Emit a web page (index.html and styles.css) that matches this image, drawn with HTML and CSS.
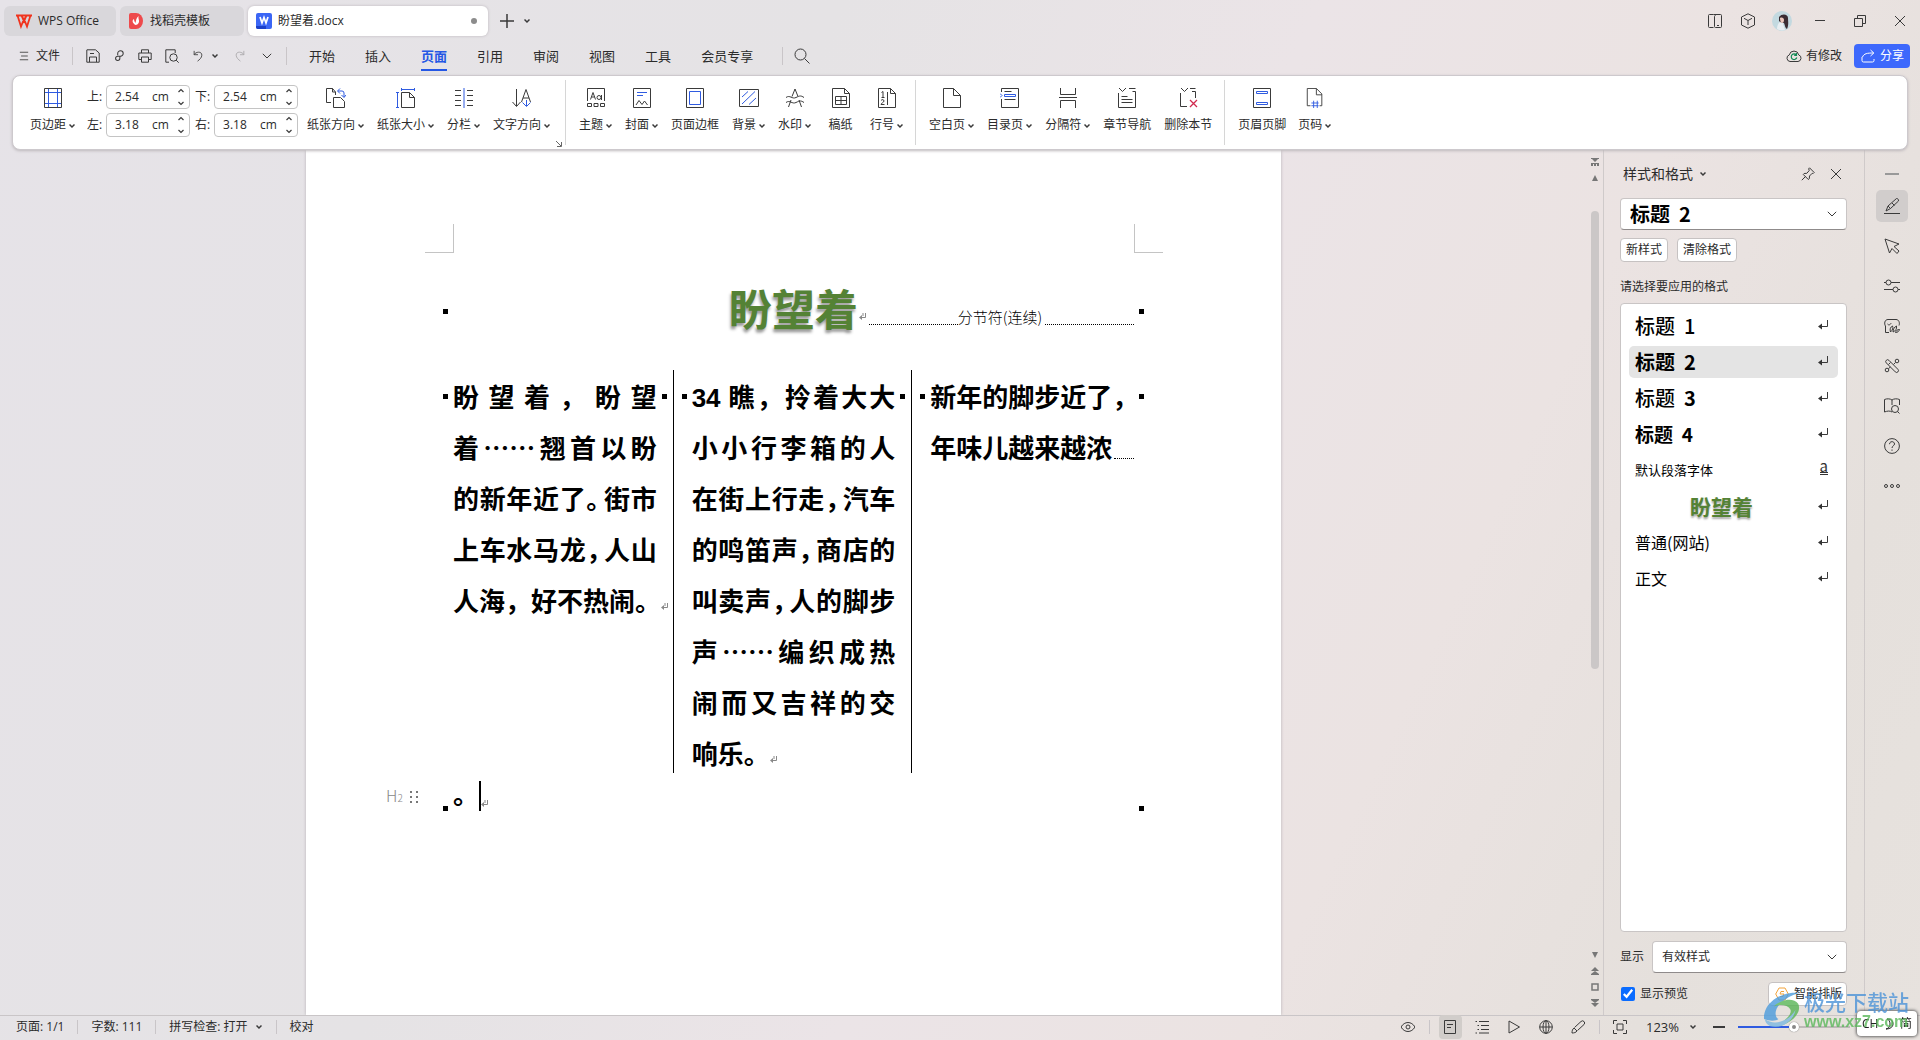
FILE: index.html
```html
<!DOCTYPE html>
<html lang="zh-CN">
<head>
<meta charset="utf-8">
<title>盼望着.docx</title>
<link rel="stylesheet" href="styles.css">
</head>
<body>
<svg class="defs" aria-hidden="true">
  <symbol id="caret" viewBox="0 0 6 6"><path d="M.5 1.500 3 4l2.500-2.500" stroke-width="1.500"/></symbol>
  <symbol id="chev" viewBox="0 0 10 6"><path d="M.8.8 5 5 9.200.8"/></symbol>
  <symbol id="spin" viewBox="0 0 6 18"><path d="M.5 4 3 1.500 5.500 4M.5 14 3 16.500 5.500 14" stroke-width="1.200"/></symbol>
  <symbol id="ret" viewBox="0 0 10 10"><path d="M9.500 0v6.500H2"/><path d="M0 6.500 4 3.500v6z" fill="#333" stroke="none"/></symbol>
  <symbol id="mark" viewBox="0 0 7 8"><path d="M6.500 0v4.500H2M4 0v3" stroke="#888"/><path d="M0 4.500 3 2v5z" fill="#888" stroke="none"/></symbol>
</svg>

<header>
  <div class="tabbar">
    <button class="tab tab-home"><svg class="i16" viewBox="0 0 16 14"><path d="M0 1.500h16M1.500 1.500l3.500 11L8 5l3 7.500 3.500-11M5.500 1.500l2.500 6 2.500-6" stroke="#f0331d" stroke-width="1.800"/></svg><span>WPS Office</span></button>
    <button class="tab tab-tpl"><svg class="i16" viewBox="0 0 14 16"><path d="M0 2a2 2 0 0 1 2-2h5a7 8 0 0 1 0 16H2a2 2 0 0 1-2-2z" fill="#ee4a4c" stroke="none"/><path d="M6.500 12C3 10 3 7 5 6c0 2 1 3 1.500 4C7 8 7 5 9.500 3c-.5 3 1 4 .5 6s-2 3-3.500 3z" fill="#fff" stroke="none"/></svg><span>找稻壳模板</span></button>
    <button class="tab tab-doc"><svg class="i16" viewBox="0 0 16 16"><rect width="16" height="16" rx="2" fill="#3b66f5" stroke="none"/><path d="M0 13h10v3H2a2 2 0 0 1-2-2z" fill="#1c40c8" stroke="none"/><path d="m4 4 2 6 2-5.500L10 10l2-6" stroke="#fff" stroke-width="1.700"/></svg><span>盼望着.docx</span><i class="dot"></i></button>
    <button class="bare" aria-label="新建"><svg class="i14" viewBox="0 0 14 14"><path d="M7 0v14M0 7h14" stroke-width="1.500"/></svg></button>
    <button class="bare" aria-label="标签列表"><svg class="caret" viewBox="0 0 6 6"><use href="#caret"/></svg></button>
    <div class="win">
      <button class="bare" aria-label="分屏"><svg class="i14" viewBox="0 0 14 14"><path d="M5.500.5h-4a1 1 0 0 0-1 1v11a1 1 0 0 0 1 1h4M5.500.5h7a1 1 0 0 1 1 1v11a1 1 0 0 1-1 1h-5a1 1 0 0 1-1-1v-10a1 1 0 0 1 1-1M9 11.500h2"/></svg></button>
      <button class="bare" aria-label="应用"><svg class="i16" viewBox="0 0 16 16"><path d="M8 .8 14.500 4v8L8 15.200 1.500 12V4zM4 5.300 8 7.500l4-2.200M8 7.500V12"/></svg></button>
      <button class="bare" aria-label="账号"><svg class="i20" viewBox="0 0 20 20"><circle cx="10" cy="10" r="10" fill="#c3d9e0" stroke="none"/><path d="M5 18c0-4 2-7 5-8l3 9a10 10 0 0 1-8-1z" fill="#e8eef2" stroke="none"/><path d="M7 6c3-4 9-3 9 1 0 3 1 7-1 11-2-1-2-4-3-6-2 0-4-1-5-2z" fill="#3a2c33" stroke="none"/><path d="M8 7c2-1 4 0 4 2s-1 3-2 3-2-2-2-5z" fill="#ecc8bd" stroke="none"/></svg></button>
      <button class="bare" aria-label="最小化"><svg class="i12" viewBox="0 0 12 12"><path d="M1 5.500h10"/></svg></button>
      <button class="bare" aria-label="还原"><svg class="i12" viewBox="0 0 12 12"><path d="M.5 3.500h8v8h-8zM3.500 3V.5h8v8H9"/></svg></button>
      <button class="bare" aria-label="关闭"><svg class="i12" viewBox="0 0 12 12"><path d="m1 1 10 10M11 1 1 11"/></svg></button>
    </div>
  </div>

  <div class="menubar">
    <button class="bare file"><svg class="i10" viewBox="0 0 10 12"><path d="M0 1.500h10M1.500 6h8M0 10.500h10"/></svg><span>文件</span></button>
    <i class="vsep"></i>
    <div class="quick">
      <button class="bare" aria-label="保存"><svg class="i14" viewBox="0 0 14 14"><path d="M1 .8h8.500L13.200 4v9.200H.8V.8M3.500 13V8h7v5M4 4.500h4"/></svg></button>
      <button class="bare" aria-label="输出"><svg class="i12" viewBox="0 0 14 14"><path d="M5.500 6V4a3.200 3.200 0 1 1 3.200 3.200H5.500a2.500 2.500 0 1 0 2.500 2.500V7" stroke-width="1.200"/></svg></button>
      <button class="bare" aria-label="打印"><svg class="i14" viewBox="0 0 14 14"><path d="M3.500 4V.8h7V4M3 10.500H.8V4h12.400v6.500H11M3.500 8h7v5.200h-7z"/></svg></button>
      <button class="bare" aria-label="打印预览"><svg class="i14" viewBox="0 0 14 14"><path d="M4 13.200H.8V.8h9.400V4"/><circle cx="8.500" cy="8.500" r="3.700"/><path d="m11.200 11.200 2.500 2.500"/></svg></button>
      <button class="bare undo" aria-label="撤销"><svg class="i12" viewBox="0 0 12 14"><path d="M1.500 1v4.500H6M1.500 5.500C3 2 10.500 1 10.500 6c0 3-3 5.500-5 7"/></svg><svg class="caret" viewBox="0 0 6 6"><use href="#caret"/></svg></button>
      <button class="bare faded" aria-label="恢复"><svg class="i12" viewBox="0 0 12 14"><path d="M10.500 1v4.500H6M10.500 5.500C9 2 1.500 1 1.500 6c0 3 3 5.500 5 7"/></svg></button>
      <button class="bare" aria-label="更多命令"><svg class="i10" viewBox="0 0 10 6"><use href="#chev"/></svg></button>
    </div>
    <i class="vsep"></i>
    <nav class="menu">
      <a href="#">开始</a><a href="#">插入</a><a href="#" class="on">页面</a><a href="#">引用</a><a href="#">审阅</a><a href="#">视图</a><a href="#">工具</a><a href="#">会员专享</a>
    </nav>
    <i class="vsep"></i>
    <button class="bare search" aria-label="搜索"><svg class="i16" viewBox="0 0 16 16"><circle cx="6.500" cy="6.500" r="5.500"/><path d="m10.500 10.500 5 5"/></svg></button>
    <div class="share-area">
      <button class="bare changed"><svg class="i16" viewBox="0 0 16 14"><path d="M4 12.500a3.400 3.400 0 0 1-.7-6.600 4.800 4.800 0 0 1 9.400 0 3.400 3.400 0 0 1-.7 6.600z"/><path d="M10.300 6a2.800 2.800 0 1 0 .5 2.500M10.500 4v2.300H8.200" stroke="#118a55" stroke-width="1.200"/></svg><span>有修改</span></button>
      <button class="share"><svg class="i14" viewBox="0 0 14 14"><path d="M1 8v3.500a1.500 1.500 0 0 0 1.500 1.500h9a1.500 1.500 0 0 0 1.500-1.500V10M1.500 8C3 4.500 6 4 12.500 4M9.500 1l3.300 3-3.300 3" stroke="#fff"/></svg><span>分享</span></button>
    </div>
  </div>

  <section class="ribbon">
    <div class="group">
      <button class="cmd"><svg class="i20" viewBox="0 0 20 20"><path d="M1.500.5h17v19h-17z"/><path d="M5.500 1v18M14.500 1v18M2 4.500h16M2 15.500h16" class="b"/></svg><span>页边距<svg class="caret" viewBox="0 0 6 6"><use href="#caret"/></svg></span></button>
      <div class="margins">
        <label for="mt">上:</label><div class="num"><input id="mt" value="2.54"><span>cm</span><svg viewBox="0 0 6 18"><use href="#spin"/></svg></div>
        <label for="mb">下:</label><div class="num"><input id="mb" value="2.54"><span>cm</span><svg viewBox="0 0 6 18"><use href="#spin"/></svg></div>
        <label for="ml">左:</label><div class="num"><input id="ml" value="3.18"><span>cm</span><svg viewBox="0 0 6 18"><use href="#spin"/></svg></div>
        <label for="mr">右:</label><div class="num"><input id="mr" value="3.18"><span>cm</span><svg viewBox="0 0 6 18"><use href="#spin"/></svg></div>
      </div>
      <button class="cmd"><svg class="i20" viewBox="0 0 20 20"><path d="M5 14.500H.5V.5h6L9.500 4v3M6.500.5V4h3M7.500 19.500v-10h7l4 4v6z"/><path d="M12 3h4a2 2 0 0 1 2 2v4M14 .5 11.500 3 14 5.500M15.500 7 18 9.500 20 7" class="b"/></svg><span>纸张方向<svg class="caret" viewBox="0 0 6 6"><use href="#caret"/></svg></span></button>
      <button class="cmd"><svg class="i20" viewBox="0 0 20 20"><path d="M5.500 4.500h8l5 5v10h-13zM13.500 4.500v5h5"/><path d="M5.500 1.500h13M5.500 0v3M18.500 0v3M1.500 5v14.500M0 4.500h3M0 19.500h3" class="b"/></svg><span>纸张大小<svg class="caret" viewBox="0 0 6 6"><use href="#caret"/></svg></span></button>
      <button class="cmd"><svg class="i20" viewBox="0 0 20 20"><path d="M1 2.500h6M1 7.500h6M1 12.500h6M1 17.500h6M13 2.500h6M13 7.500h6M13 12.500h6M13 17.500h6"/><path d="M10 0v20" class="b"/></svg><span>分栏<svg class="caret" viewBox="0 0 6 6"><use href="#caret"/></svg></span></button>
      <button class="cmd"><svg class="i20" viewBox="0 0 20 20"><path d="M4.500 1v17M.5 14l4 4.500 4-4.500M9.500 14 14 1.500 18.500 14M11 10h6"/><path d="M14.500 12v6M10.500 14.500l4 4 4-4" class="b"/></svg><span>文字方向<svg class="caret" viewBox="0 0 6 6"><use href="#caret"/></svg></span></button>
      <button class="bare launch" aria-label="页面设置"><svg viewBox="0 0 6 6"><path d="M0 0l5 5M5.500 1v4.500H1" stroke="#666"/></svg></button>
    </div>
    <div class="group">
      <button class="cmd"><svg class="i20" viewBox="0 0 20 20"><path d="M1.500 13V.5h17V13M1.500 15.500h4v3h-4zM8 15.500h4v3H8zM14.500 15.500h4v3h-4z"/><path d="m4.500 11.500 2.500-7 2.500 7M5.500 9h3"/><circle cx="13" cy="9.500" r="2"/><path d="M15.500 7v5"/></svg><span>主题<svg class="caret" viewBox="0 0 6 6"><use href="#caret"/></svg></span></button>
      <button class="cmd"><svg class="i20" viewBox="0 0 20 20"><path d="M1.500.5h17v19h-17zM4 17l3-4.500 3 4 2.500-3.500L15.500 17"/><path d="M5 4.500h10M5 7.500h6" class="b"/></svg><span>封面<svg class="caret" viewBox="0 0 6 6"><use href="#caret"/></svg></span></button>
      <button class="cmd"><svg class="i20" viewBox="0 0 20 20"><path d="M1.500.5h17v19h-17z"/><path d="M4.500 3.500h11v13h-11z" class="b"/></svg><span>页面边框</span></button>
      <button class="cmd"><svg class="i20" viewBox="0 0 20 20"><path d="M.5 1.500h19v17H.5z"/><path d="m3 9 6-5.500M3 16 16 3.500M10 16.500l7-6.500" class="b"/></svg><span>背景<svg class="caret" viewBox="0 0 6 6"><use href="#caret"/></svg></span></button>
      <button class="cmd"><svg class="i20" viewBox="0 0 20 20"><path d="M7 8.500 10 1l3 7.500M3.500 19 6 12M16.500 19 14 12M1 9.500c4-3 6 2 10 0s5-2 8 0M1 14.500c4-3 6 2 10 0s5-2 8 0"/></svg><span>水印<svg class="caret" viewBox="0 0 6 6"><use href="#caret"/></svg></span></button>
      <button class="cmd"><svg class="i20" viewBox="0 0 20 20"><path d="M1.500.5h12l5 5v14h-17zM13.500.5v5h5M4.500 8.500h11v8h-11zM4.500 12.500h11M10 8.500v8"/></svg><span>稿纸</span></button>
      <button class="cmd"><svg class="i20" viewBox="0 0 20 20"><path d="M1.500.5h12l5 5v14h-17zM13.500.5v5h5M10.500 4v13M4.500 4.500 6 3.500V9M4.500 9.500h3M4 12.500c1-1.500 3-1 3 .5S4 15 4 16.500h3.500"/></svg><span>行号<svg class="caret" viewBox="0 0 6 6"><use href="#caret"/></svg></span></button>
    </div>
    <div class="group">
      <button class="cmd"><svg class="i20" viewBox="0 0 20 20"><path d="M1.500.5h10l7 7v12h-17zM11.500.5v7h7"/></svg><span>空白页<svg class="caret" viewBox="0 0 6 6"><use href="#caret"/></svg></span></button>
      <button class="cmd"><svg class="i20" viewBox="0 0 20 20"><path d="M1.500 4V.5h17v19h-17V11M4.500 3.500h7M4.500 11.500h11"/><path d="M4.500 6.500h11v2h-11zM0 5.500l2 2-2 2" class="b"/></svg><span>目录页<svg class="caret" viewBox="0 0 6 6"><use href="#caret"/></svg></span></button>
      <button class="cmd"><svg class="i20" viewBox="0 0 20 20"><path d="M2.500 0v6.500h15V0M2.500 20v-7.500h15V20M1 9.500h18"/></svg><span>分隔符<svg class="caret" viewBox="0 0 6 6"><use href="#caret"/></svg></span></button>
      <button class="cmd"><svg class="i20" viewBox="0 0 20 20"><path d="M1.500 5v14.500h17v-16h-3M12 .5h6.500M2 0l3.500 3.500L9 0M4.500 8.500h6M4.500 11.500h11M4.500 14.500h11"/></svg><span>章节导航</span></button>
      <button class="cmd"><svg class="i20" viewBox="0 0 20 20"><path d="M2.500 5v13.500H9M12 .5h5.500M14 3.500h3.500V10M3 0l3.500 3.500L10 0"/><path d="m12 12 7 7M19 12l-7 7" stroke="#d12a4f" stroke-width="1.300"/></svg><span>删除本节</span></button>
    </div>
    <div class="group">
      <button class="cmd"><svg class="i20" viewBox="0 0 20 20"><path d="M1.500.5h17v19h-17z"/><path d="M4.500 3.500h11v2h-11zM4.500 14.500h11v2h-11z" class="b"/></svg><span>页眉页脚</span></button>
      <button class="cmd"><svg class="i20" viewBox="0 0 20 22"><path d="M5 19.500H1.500V.5h10l6 6v13H15M11.500.5v7h6"/><path d="M8.500 14v8M12.500 14v8M6 16.500h8M6 19.500h8" class="b"/></svg><span>页码<svg class="caret" viewBox="0 0 6 6"><use href="#caret"/></svg></span></button>
    </div>
  </section>
</header>

<main>
  <div class="canvas">
    <article class="page">
      <div class="corners"><i></i><i></i></div>
      <div class="title-row marked">
        <h1>盼望着</h1>
        <div class="break"><svg class="mark" viewBox="0 0 7 8"><use href="#mark"/></svg><i class="dots"></i><span>分节符(连续)</span><i class="dots"></i></div>
      </div>
      <div class="columns">
        <div class="col marked">
          <p class="j">盼望着，盼望</p><p class="j">着……翘首以盼</p><p class="j">的新年近了<span class="half">。</span>街市</p><p class="j">上车水马龙<span class="half">，</span>人山</p><p>人海，好不热闹。<svg class="mark" viewBox="0 0 7 8"><use href="#mark"/></svg></p>
        </div>
        <div class="col marked">
          <p class="j"><span class="latin">34</span> 瞧，拎着大大</p><p class="j">小小行李箱的人</p><p class="j">在街上行走<span class="half">，</span>汽车</p><p class="j">的鸣笛声<span class="half">，</span>商店的</p><p class="j">叫卖声<span class="half">，</span>人的脚步</p><p class="j">声……编织成热</p><p class="j">闹而又吉祥的交</p><p>响乐。<svg class="mark" viewBox="0 0 7 8"><use href="#mark"/></svg></p>
        </div>
        <div class="col marked">
          <p>新年的脚步近了<span class="half">，</span></p><p class="tail">年味儿越来越浓<i class="dots"></i></p>
        </div>
      </div>
      <div class="last marked">
        <div class="handle"><span>H<small>2</small></span><svg viewBox="0 0 10 14"><path d="M1 1h2v2H1zM7 1h2v2H7zM1 6h2v2H1zM7 6h2v2H7zM1 11h2v2H1zM7 11h2v2H7z" fill="#777" stroke="none"/></svg></div>
        <span>。</span><i class="cursor"></i><svg class="mark" viewBox="0 0 7 8"><use href="#mark"/></svg>
      </div>
    </article>
  </div>

  <div class="scroll">
    <svg class="s8" viewBox="0 0 8 8"><path d="M0 0h8v1H0zM1 1h6L4 4zM0 5h8v3H6V6H5v2H3V6H2v2H0z"/></svg>
    <svg class="s8" viewBox="0 0 8 8"><path d="M4 1 7 7H1z"/></svg>
    <i class="thumb"></i>
    <svg class="s8 down" viewBox="0 0 8 8"><path d="M4 7 7 1H1z"/></svg>
    <svg class="s8" viewBox="0 0 8 8"><path d="M4 0l4 4H0zM4 4l4 3H0zM0 7h8v1H0z"/></svg>
    <svg class="s8" viewBox="0 0 8 8"><path d="M1 1h6v6H1z" fill="none" stroke="#777" stroke-width="1.500"/></svg>
    <svg class="s8" viewBox="0 0 8 8"><path d="M4 8l4-4H0zM4 4l4-3H0zM0 0h8v1H0z"/></svg>
  </div>

  <aside class="panel">
    <div class="panel-head"><h2>样式和格式</h2><svg class="caret" viewBox="0 0 6 6"><use href="#caret"/></svg>
      <div class="panel-btns"><button class="bare" aria-label="固定"><svg class="i14" viewBox="0 0 14 14"><path d="M8.500.8l4.700 4.700-1 1-1-.2-2.700 2.700-.2 2.700-1 .8-5-5 .8-1L5.800 6.300 8.200 3.600 7.700 1.800zM4.500 9.500.8 13.200"/></svg></button><button class="bare" aria-label="关闭窗格"><svg class="i12" viewBox="0 0 12 12"><path d="m1 1 10 10M11 1 1 11"/></svg></button></div>
    </div>
    <div class="drop current"><select aria-label="当前样式"><option>标题&nbsp; 2</option></select><svg class="i10" viewBox="0 0 10 6"><use href="#chev"/></svg></div>
    <div class="row"><button class="small">新样式</button><button class="small">清除格式</button></div>
    <p class="hint">请选择要应用的格式</p>
    <ul class="styles">
      <li class="s1"><span>标题&nbsp; 1</span><svg class="i10" viewBox="0 0 10 10"><use href="#ret"/></svg></li>
      <li class="s2 sel"><span>标题&nbsp; 2</span><svg class="i10" viewBox="0 0 10 10"><use href="#ret"/></svg></li>
      <li class="s1"><span>标题&nbsp; <b>3</b></span><svg class="i10" viewBox="0 0 10 10"><use href="#ret"/></svg></li>
      <li class="s4"><span>标题&nbsp; 4</span><svg class="i10" viewBox="0 0 10 10"><use href="#ret"/></svg></li>
      <li class="s5"><span>默认段落字体</span><i class="char">a</i></li>
      <li class="s6"><span>盼望着</span><svg class="i10" viewBox="0 0 10 10"><use href="#ret"/></svg></li>
      <li class="s7"><span>普通(网站)</span><svg class="i10" viewBox="0 0 10 10"><use href="#ret"/></svg></li>
      <li class="s7"><span>正文</span><svg class="i10" viewBox="0 0 10 10"><use href="#ret"/></svg></li>
    </ul>
    <div class="row show"><label for="show">显示</label><div class="drop"><select id="show"><option>有效样式</option></select><svg class="i10" viewBox="0 0 10 6"><use href="#chev"/></svg></div></div>
    <div class="row foot"><label class="check"><input type="checkbox" checked>显示预览</label><button class="small smart"><svg class="i14" viewBox="0 0 14 14"><path d="M4 1h6l3.300 6L10 13H4L.7 7z" stroke="#f2a33a"/><path d="M9 4.500H6L5 7h4L8 9.500H5" stroke="#f2a33a"/></svg>智能排版</button></div>
  </aside>

  <nav class="side">
    <button class="bare" aria-label="收起"><svg class="i16" viewBox="0 0 16 16"><path d="M1 8h14" stroke="#999" stroke-width="2"/></svg></button>
    <button class="bare on" aria-label="样式"><svg class="i16" viewBox="0 0 16 16"><path d="M0 15.500h16M2 13l2-5 2.500 2.500zM4 8l8.500-7.500a2 2 0 0 1 2 2.500L6.500 10.500M8 5l2.500 2.500"/></svg></button>
    <button class="bare" aria-label="选择"><svg class="i16" viewBox="0 0 16 16"><path d="m1 1 14 5-5 2.500 5 4.500-2 2.500-5-5L5.500 15z"/></svg></button>
    <button class="bare" aria-label="属性"><svg class="i16" viewBox="0 0 16 16"><circle cx="4.500" cy="4.500" r="2.500"/><circle cx="11.500" cy="11.500" r="2.500"/><path d="M0 4.500h2M7 4.500h9M0 11.500h9M14 11.500h2"/></svg></button>
    <button class="bare" aria-label="稻壳资源"><svg class="i16" viewBox="0 0 16 16"><path d="M5 14.500H1.500V8C0 6 .5 1.500 4 1.500h8c3 0 4 3.500 3 6M3.500 6C5 8 7 6 7 5M6.500 14c-1-3 0-5 2-6 1 2 0 4-2 6zM9 14c0-3 1.500-5 3.500-6 .5 3-1 5-3.500 6zM11.500 14.500c.5-2 2-3 4-3-.5 2-2 3-4 3z"/></svg></button>
    <button class="bare" aria-label="工具"><svg class="i16" viewBox="0 0 16 16"><path d="M2.300 2.300a1.800 1.800 0 0 1 2.600 0l9 9a1.800 1.800 0 0 1-2.600 2.600l-9-9a1.800 1.800 0 0 1 0-2.600M4.500 6.500l2-2"/><circle cx="13" cy="3" r="1.800"/><circle cx="3" cy="12" r="1.800"/><path d="m11.500 4.500-2 2M4.500 10.500l2-1.500"/></svg></button>
    <button class="bare" aria-label="查找"><svg class="i16" viewBox="0 0 16 16"><path d="M8 14c-2-1.500-5-1-7.500 0V1.500C3 .5 6 .5 8 2c2-1.500 5-1.500 7.500-.5V7M8 2v5"/><circle cx="11" cy="11" r="3.500"/><path d="m13.500 13.500 2 2"/></svg></button>
    <button class="bare" aria-label="帮助"><svg class="i16" viewBox="0 0 16 16"><circle cx="8" cy="8" r="7.400"/><path d="M5.500 6.200c0-3.500 5-3.200 5-.2C10.500 7.800 8 7.800 8 10M8 11.500v1.300"/></svg></button>
    <button class="bare" aria-label="更多"><svg class="i16" viewBox="0 0 16 16"><circle cx="2" cy="8" r="1.500"/><circle cx="8" cy="8" r="1.500"/><circle cx="14" cy="8" r="1.500"/></svg></button>
  </nav>
</main>

<footer>
  <span>页面: 1/1</span><i class="vsep"></i><span>字数: 111</span><i class="vsep"></i><button class="bare spell">拼写检查: 打开<svg class="caret" viewBox="0 0 6 6"><use href="#caret"/></svg></button><i class="vsep"></i><span>校对</span>
  <div class="views">
    <button class="bare" aria-label="护眼模式"><svg class="i14" viewBox="0 0 14 14"><path d="M0 7c3.500-6 10.500-6 14 0-3.500 6-10.500 6-14 0z"/><circle cx="7" cy="7" r="2"/></svg></button>
    <i class="vsep"></i>
    <button class="bare on" aria-label="页面视图"><svg class="i14" viewBox="0 0 14 14"><path d="M1.500.5h11v13h-11zM4 4.500h6M4 7.500h4"/></svg></button>
    <button class="bare" aria-label="大纲"><svg class="i14" viewBox="0 0 14 14"><path d="M4 1.500h10M6 5.500h8M6 9.500h8M4 13h10M.5 1.500h1.500M2.500 5.500H4M2.500 9.500H4M.5 13H2"/></svg></button>
    <button class="bare" aria-label="阅读"><svg class="i14" viewBox="0 0 14 14"><path d="M2 1l10.500 6L2 13z"/></svg></button>
    <button class="bare" aria-label="Web 版式"><svg class="i14" viewBox="0 0 14 14"><circle cx="7" cy="7" r="6.300"/><ellipse cx="7" cy="7" rx="3" ry="6.300"/><path d="M7 .7v12.600M.7 7h12.600"/></svg></button>
    <button class="bare" aria-label="写作模式"><svg class="i14" viewBox="0 0 14 14"><path d="M1 13c0-2 .5-4 2-5l3 3c-1 1.500-3 2-5 2zM3.500 7.500l6.500-6a2 2 0 0 1 3 3L6.500 10.500"/></svg></button>
    <i class="vsep"></i>
    <button class="bare" aria-label="适合页面"><svg class="i14" viewBox="0 0 14 14"><path d="M.5 4V.5H4M10 .5h3.500V4M13.500 10v3.500H10M4 13.500H.5V10M4 4h6v6H4z"/></svg></button>
    <button class="bare zoomv">123%<svg class="caret" viewBox="0 0 6 6"><use href="#caret"/></svg></button>
    <button class="bare minus" aria-label="缩小"><svg class="i12" viewBox="0 0 12 12"><path d="M0 6h12" stroke-width="2"/></svg></button>
    <input class="slider" type="range" min="0" max="100" value="50" aria-label="显示比例">
  </div>
</footer>

<div class="ime"><span>CH</span><svg class="i12" viewBox="0 0 12 12"><path d="M4 1c4 0 6 2 6 5s-3 5-7 5c3-1 4-2 4-5S6 2 4 1z" stroke="#222"/></svg><span>简</span></div>
<div class="watermark">
  <svg viewBox="0 0 42 40"><path d="M40 1C20-1 0 12 1 30c7 3 14 2 16 0-4-2-5-10 2-17C25 7 32 3 40 1z" fill="#4b9bdc" stroke="none"/><path d="M12 16c8-8 22-10 27-3 4 8-4 22-26 26 14-8 20-16 17-20-3-5-11-6-18-3z" fill="#58b556" stroke="none"/><path d="M2 30c10 8 26 3 34-10-2 12-16 22-28 18-4-2-6-5-6-8z" fill="#7cb8e0" stroke="none"/></svg>
  <div><b>极光下载站</b><em>www.xz7.com</em></div>
</div>
</body>
</html>
```
FILE: styles.css
```css
* { box-sizing: border-box; }
body {
  margin: 0;
  height: 100vh;
  display: flex;
  flex-direction: column;
  overflow: hidden;
  font: 12px/16px "Open Sans", "Noto Sans CJK SC", sans-serif;
  color: #2b2b2b;
  background: linear-gradient(115deg, #e6e3e8 0%, #e5e3e5 35%, #ebe4e7 55%, #ebe3e2 72%, #e5e0dc 88%, #e7e2de 100%);
}
svg { fill: none; stroke: #3a3a3a; stroke-width: 1; flex: none; display: block; }
svg .b { stroke: #2f5be0; }
.defs { width: 0; height: 0; position: absolute; }
button, input, select { font: inherit; color: inherit; }
button { cursor: default; }
.bare { border: 0; background: none; padding: 0; display: flex; align-items: center; justify-content: center; white-space: nowrap; }
.i10 { width: 10px; height: 10px; }
.i12 { width: 12px; height: 12px; }
.i14 { width: 14px; height: 14px; }
.i16 { width: 16px; height: 16px; }
.i20 { width: 20px; height: 20px; }
.caret { width: 6px; height: 6px; }
.vsep { width: 1px; height: 18px; background: #c9c5c8; flex: none; }
h1, h2, p, ul { margin: 0; padding: 0; }

/* Tab bar */
.tabbar { height: 40px; padding: 2px 0 0 4px; display: flex; align-items: center; gap: 4px; }
.tab { height: 30px; border: 0; border-radius: 6px; background: #d9d7db; display: flex; align-items: center; gap: 6px; padding: 0 12px; white-space: nowrap; }
.tab-home { width: 112px; }
.tab-tpl { width: 124px; padding: 0 8px; }
.tab-doc { width: 240px; padding: 0 11px 0 8px; background: #fff; box-shadow: 0 0 3px #bbb6bb; }
.dot { width: 6px; height: 6px; border-radius: 50%; background: #8c8c8c; margin-left: auto; }
.tabbar > .bare { margin-left: 8px; }
.tabbar > .bare + .bare { margin-left: 6px; }
.win { margin-left: auto; display: flex; align-items: center; }
.win .bare { width: 40px; height: 20px; }
.win .bare:nth-child(1), .win .bare:nth-child(2) { width: 33px; }
.win .bare:nth-child(3) { width: 36px; }

/* Menu bar */
.menubar { height: 35px; padding: 0 10px 4px 19px; display: flex; align-items: center; }
.file { gap: 7px; margin-right: 12px; }
.quick { display: flex; align-items: center; gap: 13px; padding: 0 14px 0 13px; }
.quick .undo { gap: 8px; }
.quick .faded { opacity: .35; margin: 0 3px; }
.menu { display: flex; height: 30px; align-items: stretch; padding: 0 14px 0 7px; }
.menu a { margin: 0 15px; font-size: 13px; line-height: 31px; color: inherit; text-decoration: none; }
.menu .on { color: #2457e5; font-weight: 700; border-bottom: 2px solid #2457e5; }
.search { margin-left: 11px; }
.share-area { margin-left: auto; display: flex; align-items: center; gap: 12px; }
.changed { gap: 4px; }
.share { height: 24px; border: 0; border-radius: 4px; background: #3d68fc; color: #fff; display: flex; align-items: center; gap: 5px; padding: 0 6px 0 7px; white-space: nowrap; width: 56px; }

/* Ribbon */
.ribbon { margin: 0 12px; height: 75px; border-radius: 8px; background: #fff; border: 1px solid #cdc9cd; box-shadow: 0 1px 3px #bdb8bc; display: flex; padding: 4px 0; position: relative; z-index: 1; }
.group { display: flex; gap: 13px; padding: 0 12px 0 13px; border-right: 1px solid #d6d6d6; position: relative; align-items: flex-start; }
.group:first-child { padding-left: 17px; width: 553px; flex: none; }
.group:last-child { border-right: 0; gap: 12px; }
.cmd { border: 0; background: none; padding: 8px 0 0; min-width: 33px; display: flex; flex-direction: column; align-items: center; gap: 9px; white-space: nowrap; }
.cmd span { display: flex; align-items: center; gap: 3px; }
.cmd .caret { margin-top: 2px; }
.margins { display: grid; grid-template-columns: 15px 84px 16px 84px; column-gap: 4px; row-gap: 4px; padding-top: 5px; margin: 0 -4px 0 -1px; align-items: center; }
.margins label:nth-of-type(even) { margin-left: 1px; }
.num { height: 24px; border: 1px solid #c4c4c4; border-radius: 4px; display: flex; align-items: center; padding: 0 5px 0 8px; background: #fff; }
.num input { width: 37px; border: 0; padding: 0; background: none; outline: 0; }
.num span { flex: 1; }
.num svg { width: 6px; height: 18px; }
.launch { position: absolute; right: 3px; bottom: -2px; }
.launch svg { width: 6px; height: 6px; }

/* Main area */
main { flex: 1; min-height: 0; display: flex; }
.canvas { flex: 1; min-width: 0; overflow: hidden; display: flex; justify-content: center; }
.page { width: 975px; background: #fff; box-shadow: 0 0 3px #b8b3b8; padding: 74px 147px 0; color: #000; font-family: "Noto Sans CJK SC", sans-serif; }
.corners { display: flex; justify-content: space-between; margin: 0 -29px 0 -28px; }
.corners i { width: 29px; height: 29px; border: solid #c4c4c4; border-width: 0 1px 1px 0; }
.corners i + i { border-width: 0 0 1px 1px; }
.marked { position: relative; }
.marked::before, .marked::after { content: ""; position: absolute; width: 5px; height: 5px; background: #000; top: 24px; left: -10px; }
.marked::after { left: auto; right: -10px; }
.title-row { display: grid; grid-template-columns: 1fr auto 1fr; height: 117px; align-items: start; }
.title-row::before, .title-row::after { top: 56px; }
h1 { grid-column: 2; font-size: 43px; line-height: 56px; margin-top: 26px; color: #548235; text-shadow: -1px 3px 3px #999; font-weight: 700; }
.break { display: flex; align-items: flex-end; padding: 54px 0 0 1px; font-size: 15px; line-height: 20px; font-weight: 300; }
.break .mark { margin: 0 3px 6px 0; }
.dots { flex: 1; border-bottom: 1px dotted #000; height: 1px; margin-bottom: 2px; }
.break .dots + span { margin: 0 3px 0 0; }
.mark { width: 7px; height: 8px; display: inline-block; }
.columns { display: grid; grid-template-columns: repeat(3, minmax(0, 1fr)); column-gap: 35px; }
.col { font-size: 26px; line-height: 51px; font-weight: 700; white-space: nowrap; height: 403px; }
.col p { height: 51px; }
.col + .col { border-left: 1px solid #000; margin-left: -19px; padding-left: 18px; }
.col + .col::before { left: 8px; }
.j { text-align: justify; text-align-last: justify; text-justify: inter-character; white-space: normal; }
.half { font-feature-settings: "halt"; margin-right: 4px; }
.latin { font-family: "Liberation Sans", sans-serif; }
.tail { display: flex; align-items: flex-end; }
.tail .dots { margin: 0 0 13px 2px; }
.last { display: flex; height: 51px; font-size: 26px; line-height: 40px; font-weight: 700; padding-top: 3px; }
.last::before, .last::after { top: 33px; }
.last > span { width: 26px; margin-top: -3px; }
.last .mark { margin: 24px 0 0; }
.cursor { width: 2px; height: 30px; background: #000; margin-top: 5px; }
.handle { position: absolute; left: -67px; top: 12px; display: flex; align-items: center; gap: 6px; font-size: 16px; line-height: 20px; font-weight: 300; color: #888; }
.handle small { font-size: 10px; }
.handle svg { width: 10px; height: 14px; }

/* Scroll bar */
.scroll { width: 16px; display: flex; flex-direction: column; align-items: center; padding: 8px 0; gap: 8px; }
.s8 { width: 8px; height: 8px; fill: #777; stroke: none; }
.thumb { width: 8px; flex: 0 0 54%; border-radius: 4px; background: #cbc7c7; margin-top: 21px; }
.down { margin-top: auto; }

/* Style panel */
.panel { width: 262px; border: solid #cfcaca; border-width: 0 1px; padding: 11px 17px 9px 16px; display: flex; flex-direction: column; }
.panel-head { display: flex; align-items: center; gap: 7px; height: 26px; padding-left: 3px; }
.panel h2 { font-size: 14px; line-height: 20px; font-weight: 400; }
.panel-btns { margin-left: auto; display: flex; gap: 15px; padding-right: 5px; }
.drop { position: relative; flex: 1; height: 32px; }
.drop select { width: 100%; height: 32px; appearance: none; border: 1px solid #c9c5c5; border-bottom-color: #8f8b8b; border-radius: 4px; background: #fff; padding: 0 9px; outline: 0; }
.drop svg { position: absolute; right: 10px; top: 11px; }
.current { flex: none; margin-top: 11px; }
.current select { font: 700 20px/28px "Noto Sans CJK SC", sans-serif; color: #000; }
.row { display: flex; align-items: center; gap: 9px; }
.small { height: 24px; border: 1px solid #c6c2c2; border-radius: 4px; background: #fff; padding: 0 5px; white-space: nowrap; }
.current + .row { margin-top: 8px; }
.hint { margin-top: 17px; }
.styles { list-style: none; flex: 1; margin-top: 8px; background: #fff; border: 1px solid #c9c5c5; border-radius: 4px; padding: 6px 8px; color: #000; font-family: "Noto Sans CJK SC", sans-serif; }
.styles li { height: 32px; margin-bottom: 4px; display: flex; align-items: center; justify-content: space-between; padding: 0 10px 0 6px; border-radius: 5px; line-height: 28px; }
.styles .i10 { margin-bottom: 3px; }
.styles .sel { background: #e4e4e4; }
.s1 { font-size: 20px; font-weight: 500; }
.s2 { font-size: 20px; font-weight: 700; }
.s4 { font-size: 19px; font-weight: 700; }
.s5 { font-size: 13px; }
.char { font: 15px/10px "Noto Sans CJK SC", sans-serif; border-bottom: 3px double #333; height: 14px; color: #333; margin-bottom: 4px; }
.s6 { font-size: 21px; font-weight: 700; color: #548235; }
.s6 span { flex: 1; text-align: center; text-shadow: 0 2px 2px #aaa; padding-right: 10px; }
.s7 { font-size: 16px; }
.show { margin-top: 9px; }
.show .drop { margin-left: -1px; }
.foot { margin-top: 9px; justify-content: space-between; }
.check { display: flex; align-items: center; gap: 4px; }
.check input { width: 14px; height: 14px; margin: 0 1px; accent-color: #0a6cff; }
.smart { display: flex; align-items: center; gap: 5px; width: 79px; padding: 0 6px; }

/* Side bar */
.side { width: 55px; display: flex; flex-direction: column; align-items: center; gap: 8px; padding: 8px 1px 0 0; }
.side .bare { width: 32px; height: 32px; border-radius: 5px; }
.side .bare:first-child { margin-bottom: -8px; }
.side .on { background: #d1cdcc; }

/* Status bar */
footer { height: 25px; flex: none; border-top: 1px solid #c9c5c7; display: flex; align-items: center; gap: 13px; padding: 0 0 2px 16px; white-space: nowrap; }
footer .vsep { height: 14px; }
.spell { gap: 8px; padding-right: 1px; }
.views { margin-left: auto; display: flex; align-items: center; gap: 9px; padding-right: 70px; }
.views .bare { width: 23px; height: 24px; }
.views .on { background: #d1cdca; border-radius: 4px; }
.views .zoomv { width: auto; gap: 11px; margin-left: 5px; font-size: 13px; }
.views .minus { width: 12px; margin-left: 8px; }
.slider { width: 112px; height: 10px; margin: 0 0 0 4px; appearance: none; background: linear-gradient(90deg, #2f5be0 50%, #bdb9b7 50%) center / 100% 2px no-repeat; }
.slider::-webkit-slider-thumb { appearance: none; width: 10px; height: 10px; border-radius: 50%; border: 3px solid #fff; background: #888; box-shadow: 0 0 1px #555; }

/* Floating overlays */
.ime { position: fixed; right: 3px; bottom: 4px; width: 60px; height: 25px; border-radius: 4px; background: #fff; box-shadow: 0 0 3px 1px #666; display: flex; align-items: center; justify-content: space-between; padding: 0 5px; color: #222; }
.watermark { position: fixed; right: 11px; bottom: 10px; display: flex; align-items: center; gap: 1px; opacity: .8; pointer-events: none; }
.watermark svg { width: 42px; height: 36px; }
.watermark b { display: block; font-size: 21px; line-height: 24px; color: #4b93d8; font-weight: 500; }
.watermark em { display: block; font: 700 16px/16px "Liberation Sans", sans-serif; color: #5cb85c; }
```
